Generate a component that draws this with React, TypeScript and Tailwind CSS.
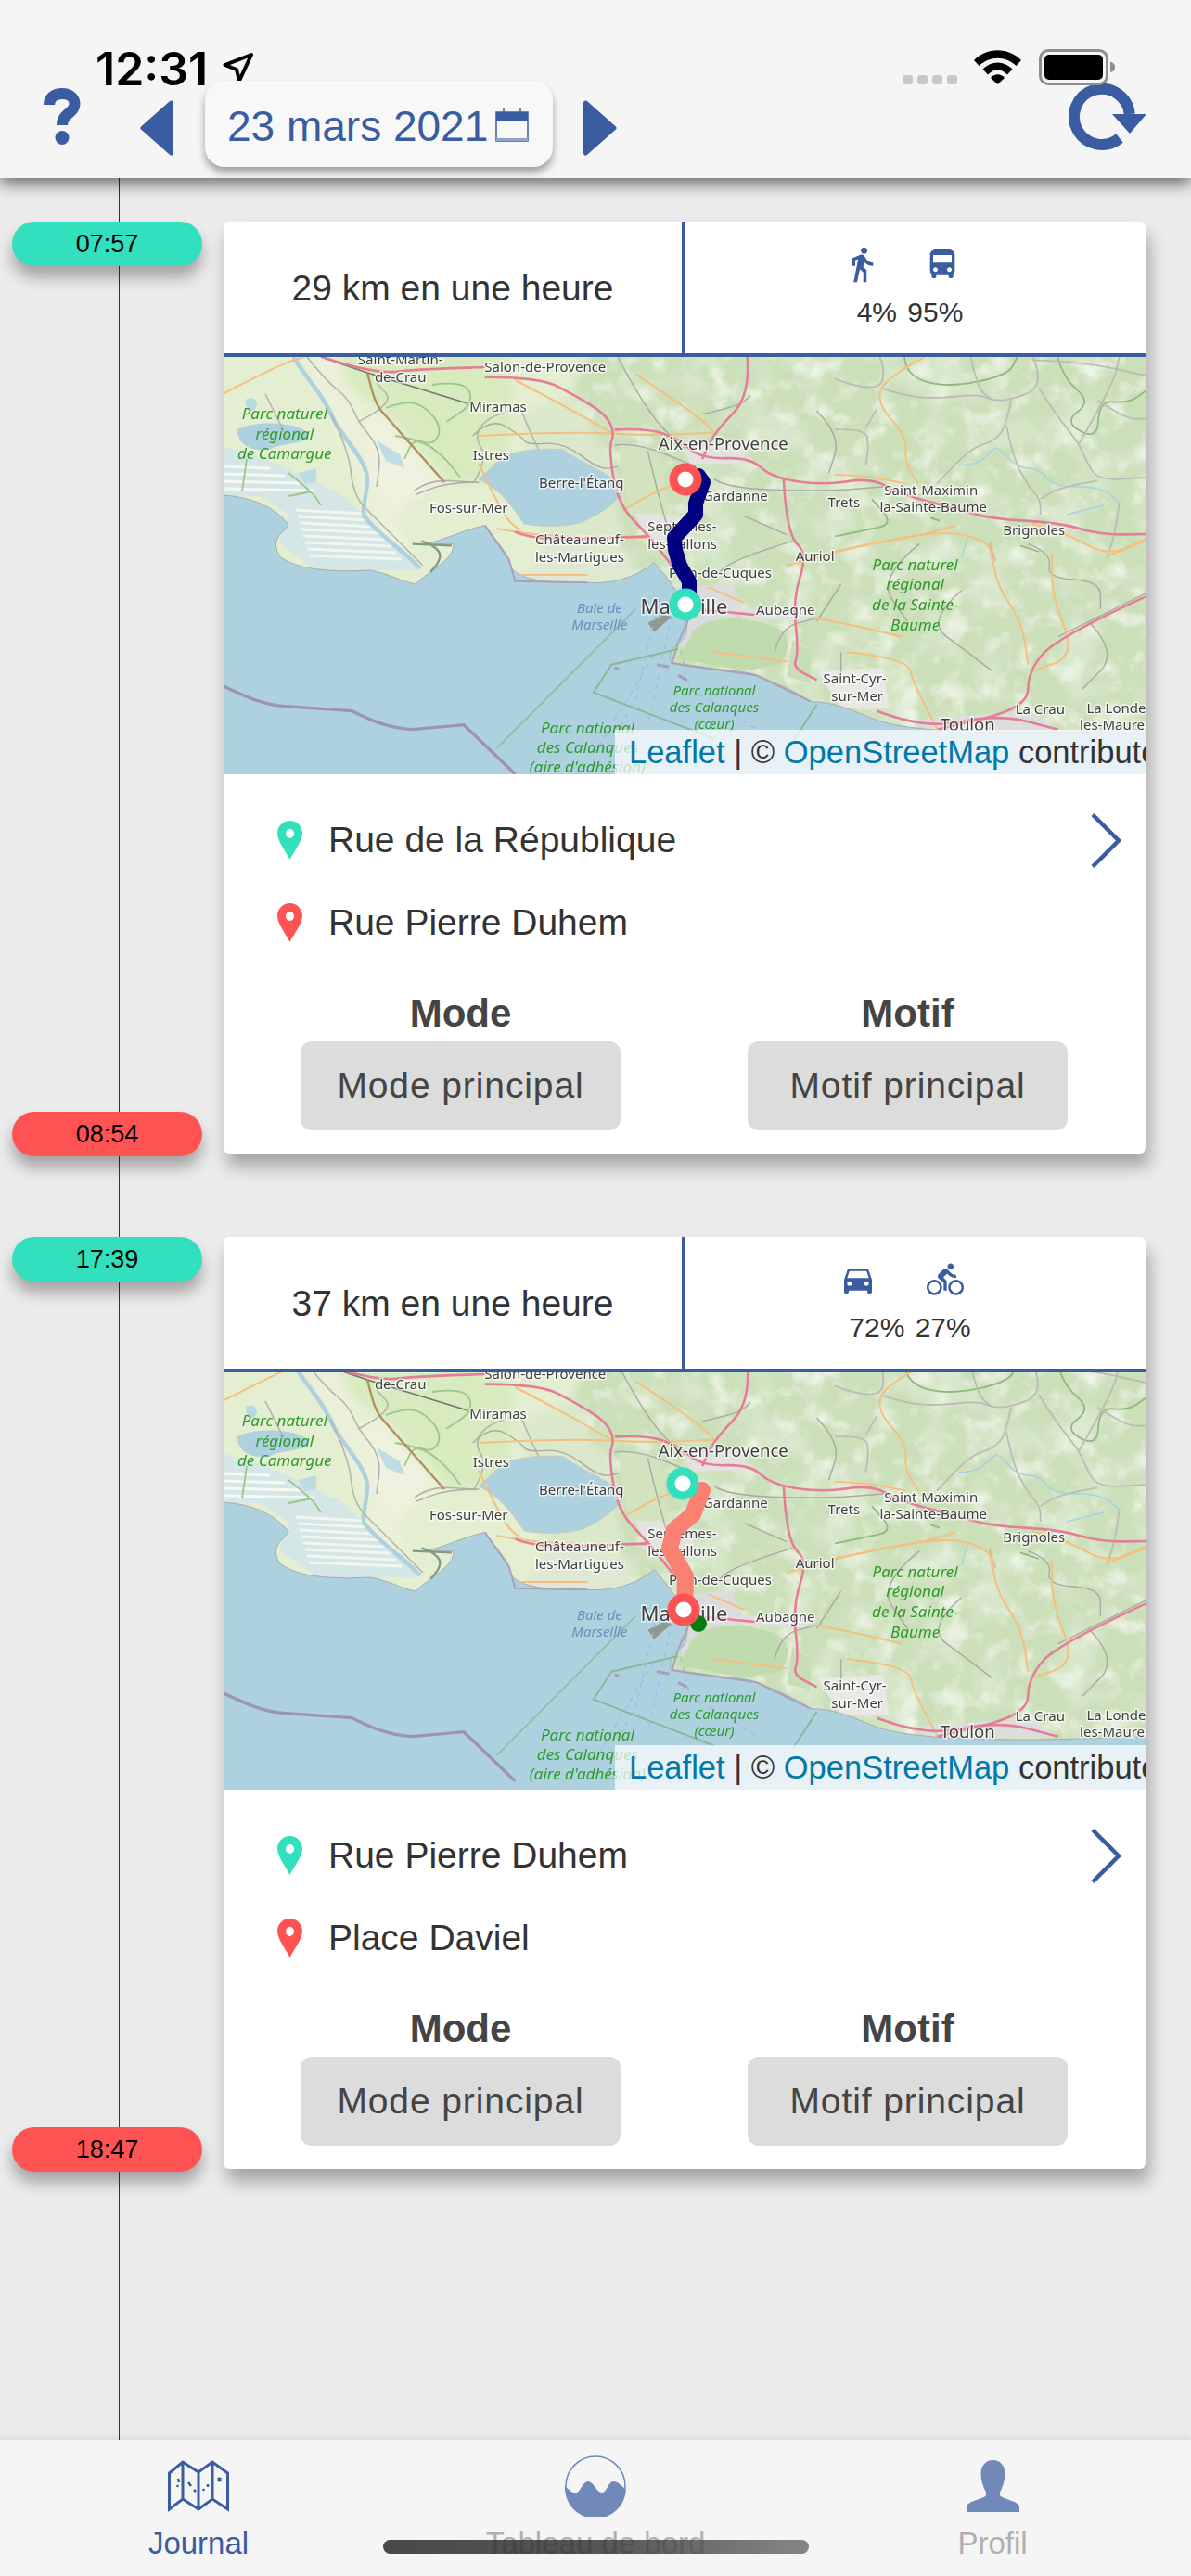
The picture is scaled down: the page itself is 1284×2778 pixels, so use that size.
import React from "react";
import { MdDirectionsWalk, MdDirectionsBus, MdDirectionsCar, MdDirectionsBike } from "react-icons/md";

const BLUE = "#3a5ca0";
const lx = (z: number) => z * 0.6506 - 11;
const ly = (z: number) => z / 3 - 15;

// Rounds a polyline "M x y L x y ..." so roads read as curves, not straight segments.
function smooth(d: string) {
  return d
    .split("M")
    .filter((s) => s.trim())
    .map((seg) => {
      const n = seg.match(/-?[\d.]+/g)!.map(Number);
      const p: [number, number][] = [];
      for (let i = 0; i + 1 < n.length; i += 2) p.push([n[i], n[i + 1]]);
      let out = `M${p[0][0]} ${p[0][1]}`;
      for (let i = 1; i < p.length - 1; i++) {
        const mx = (p[i][0] + p[i + 1][0]) / 2;
        const my = (p[i][1] + p[i + 1][1]) / 2;
        out += ` Q${p[i][0]} ${p[i][1]} ${mx} ${my}`;
      }
      const last = p[p.length - 1];
      return out + ` L${last[0]} ${last[1]}`;
    })
    .join(" ");
}

const PINK = [
  "M180 45 L265 100 L340 85 L450 78",
  "M450 110 L540 110 L600 170 L650 230 L665 290 L655 340 L670 520 L720 620 L760 720 L790 790",
  "M665 280 L720 275 L770 310 L810 375 L890 370 L925 435 L1010 460 L1090 435 L1140 490 L1220 530 L1290 570 L1400 580 L1470 620 L1545 618",
  "M885 45 L890 170 L830 290 L810 375",
  "M945 440 L950 620 L985 680 L960 830 L970 1000 L960 1050 L1000 1090",
  "M790 860 L850 870 L900 880",
  "M1545 820 L1400 950 L1350 1060 L1350 1180 L1200 1250",
  "M500 610 L530 640 L720 625",
  "M1100 1190 L1180 1250 L1300 1200 L1400 1250",
];
const ORANGE = [
  "M15 165 L110 70 L150 45",
  "M440 300 L590 285 L720 300 L830 290",
  "M1230 590 L1180 620 L1060 660 L950 720",
  "M1290 640 L1290 760 L1340 900 L1350 1040",
  "M1140 950 L1100 930 L1000 890",
  "M470 600 L520 620 L640 630 L720 630",
  "M680 540 L730 480 L780 450",
  "M1050 1000 L1150 1020 L1160 1100 L1200 1250",
  "M830 1000 L950 1030",
  "M500 120 L560 180 L660 290",
  "M700 100 L800 230 L830 290",
  "M440 390 L480 560 L510 610",
  "M1390 680 L1385 800 L1430 1010 L1360 1060",
  "M510 750 L620 750",
  "M820 790 L880 840",
  "M1480 690 L1545 640",
];
const GRAY = [
  "M670 45 L720 230 L780 340",
  "M430 300 L460 240 L510 300 L520 330 L580 320 L640 410 L670 400",
  "M665 330 L700 320 L800 400",
  "M720 350 L750 600 L790 790",
  "M810 230 L870 205 L890 170",
  "M830 440 L850 470 L1010 480 L1110 465",
  "M440 450 L390 450 L335 490",
  "M930 1000 L940 920 L1000 890",
  "M1040 1000 L1040 1090",
  "M1350 650 L1390 680 L1380 760 L1470 770 L1470 860",
  "M1170 650 L1100 760 L1150 900",
  "M880 560 L950 620",
  "M1400 950 L1545 810",
  "M960 640 L860 700 L830 760",
  "M1040 780 L1000 900",
  "M1240 800 L1180 900 L1250 1000 L1290 1060",
  "M1450 900 L1500 1000 L1440 1120",
  "M1000 220 L1040 300 L1020 420",
];
// Eastern hills, in crop coordinates of a 3x view starting at map x = 659.
const EAST_GRAY = [
  "M150 100 L220 125 L330 135 L460 120 L510 140 L560 140 L650 110 L660 50 L640 0",
  "M570 140 L555 220 L520 270 L440 295 L330 410",
  "M555 220 L575 320 L620 410 L665 460 L665 510",
  "M660 100 L710 180 L790 280 L810 330 L850 400 L1005 390",
  "M850 400 L730 420 L665 460",
  "M440 0 L460 100 L510 140",
  "M0 70 L60 95 L150 100 L160 40 L145 0",
  "M0 235 L100 230 L110 290 L100 350",
  "M100 230 L135 170",
  "M790 280 L900 90 L920 0",
  "M640 10 L800 15 L1005 60",
  "M850 140 L940 200 L1005 200",
  "M920 470 L910 560 L880 650",
  "M500 600 L520 660",
];
const EAST_RIVER = [
  "M400 350 L460 350 L510 300 L530 290 L590 360 L660 360 L710 420 L860 420 L920 470",
  "M750 510 L870 480",
  "M410 650 L430 580",
];
const EAST_PARK = [
  "M225 0 L230 60 L360 100 L560 60 L590 0",
  "M720 0 L740 70 L830 145 L740 210 L850 270 L855 140 L950 150 L1005 110",
  "M0 580 L100 560 L190 540 L120 460",
  "M310 520 L340 530 M600 610 L660 630",
];
const EAST_ORANGE = [
  "M290 0 L160 70 L135 150 L235 260 L225 340 L270 410",
  "M0 630 L130 600 L370 560 L500 600 L510 660",
  "M0 380 L110 385 L230 410",
  "M640 540 L750 570 L880 645 L1005 590",
];
const WEST_GRAY = [
  "M90 0 L110 25 L135 45 L145 70 L170 100 L165 140",
  "M45 40 L70 90",
  "M145 70 L185 50 L165 28",
  "M115 60 L135 100 L140 150 L165 175 L215 225",
  "M205 145 L220 132 L270 135",
  "M270 135 L285 110 L270 85 L285 65 L320 55",
  "M320 55 L330 80 L345 110",
];
const WEST_PARK = [
  "M175 55 L200 45 L225 60 L235 80 L225 95 L205 88 L195 110",
  "M185 85 L215 90 L240 110 L255 130",
  "M225 30 L260 25 L270 50 L240 70",
  "M20 145 L25 110 M70 125 L95 145 L105 160 M70 150 L95 145",
];
const LABELS: [string, number, number, number?][] = [
  ["Saint-Martin-", 310, 58],
  ["de-Crau", 310, 115],
  ["Salon-de-Provence", 550, 82],
  ["Miramas", 472, 210],
  ["Aix-en-Provence", 845, 330, 18.5],
  ["Istres", 460, 365],
  ["Berre-l'Étang", 610, 457],
  ["Fos-sur-Mer", 423, 538],
  ["Gardanne", 865, 498],
  ["Trets", 1045, 518],
  ["Saint-Maximin-", 1193, 480],
  ["la-Sainte-Baume", 1193, 535],
  ["Brignoles", 1360, 610],
  ["Châteauneuf-", 607, 640],
  ["les-Martigues", 607, 697],
  ["Septèmes-", 777, 598],
  ["les-Vallons", 777, 655],
  ["Plan-de-Cuques", 840, 747],
  ["Auriol", 997, 693],
  ["Marseille", 780, 858, 22],
  ["Aubagne", 948, 868],
  ["Saint-Cyr-", 1063, 1090],
  ["sur-Mer", 1067, 1147],
  ["La Crau", 1370, 1188],
  ["La Londe-", 1500, 1185],
  ["les-Maures", 1495, 1240],
  ["Toulon", 1250, 1240, 18.5],
];
const PARKS: [string, number, number, number?][] = [
  ["Parc naturel", 118, 233],
  ["régional", 118, 298],
  ["de Camargue", 118, 362],
  ["Parc naturel", 1163, 720],
  ["régional", 1163, 785],
  ["de la Sainte-", 1163, 850],
  ["Baume", 1163, 915],
  ["Parc national", 830, 1127, 15],
  ["des Calanques", 830, 1182, 15],
  ["(cœur)", 830, 1237, 15],
  ["Parc national", 620, 1248],
  ["des Calanques", 620, 1312],
  ["(aire d'adhésion)", 620, 1375],
];

const SEA =
  "M0 492 C50 490 100 520 125 590 C110 620 95 640 110 690 C130 720 170 745 260 735 C290 745 310 770 335 780 C355 740 400 700 398 650 L350 650 C380 640 420 600 450 590 C460 620 480 660 490 700 C490 740 510 780 620 775 C660 780 700 760 730 710 C745 740 770 800 790 880 C780 920 790 950 770 970 C755 1000 755 1020 760 1035 C800 1060 870 1050 900 1075 C930 1100 960 1120 990 1160 C1030 1160 1060 1190 1100 1220 C1160 1260 1300 1270 1545 1250 L1545 1500 L0 1500 Z";
const BERRE =
  "M470 385 C490 340 560 340 580 345 C610 390 650 410 680 470 C670 510 650 545 610 580 C570 600 530 590 515 585 C490 510 470 470 440 440 Z";

function MapDefs() {
  return (
    <defs>
      <filter id="map-mottle" x="0" y="0" width="100%" height="100%">
        <feTurbulence type="fractalNoise" baseFrequency="0.04" numOctaves="4" seed="11" />
        <feColorMatrix values="0 0 0 0 0.87  0 0 0 0 0.91  0 0 0 0 0.81  2.6 0 0 0 -1.3" />
      </filter>
      <filter id="map-dark" x="0" y="0" width="100%" height="100%">
        <feTurbulence type="fractalNoise" baseFrequency="0.02" numOctaves="3" seed="4" />
        <feColorMatrix values="0 0 0 0 0.74  0 0 0 0 0.84  0 0 0 0 0.67  0 2.4 0 0 -1.15" />
      </filter>
      <filter id="map-soft" x="-2%" y="-2%" width="104%" height="104%">
        <feGaussianBlur stdDeviation="0.45" />
      </filter>
      <filter id="map-land" x="-5%" y="-5%" width="110%" height="110%">
        <feGaussianBlur stdDeviation="5" />
      </filter>
      <clipPath id="map-east">
        <path d="M370 -20 L1020 -20 L1020 480 L370 480 Z" />
      </clipPath>
    </defs>
  );
}

function Stroke({ items, color, w, op }: { items: string[]; color: string; w: number; op?: number }) {
  return (
    <>
      {items.map((d, i) => (
        <path key={i} d={smooth(d)} stroke={color} strokeWidth={w} strokeOpacity={op} fill="none" vectorEffect="non-scaling-stroke" />
      ))}
    </>
  );
}

function BaseMap() {
  return (
    <g filter="url(#map-soft)">
      <rect x="-20" y="-20" width="1040" height="500" fill="#cbdfb9" />
      <rect x="-20" y="-20" width="1040" height="500" filter="url(#map-dark)" />
      <rect x="-20" y="-20" width="1040" height="500" filter="url(#map-mottle)" />
      {/* western plains */}
      <g filter="url(#map-land)">
        <path d="M-25 -25 L395 -25 L370 60 L395 130 L430 210 L470 270 L300 280 L-25 220 Z" fill="#e4eed0" />
        <path d="M110 -25 L300 -25 L315 60 L300 135 L245 135 L170 55 L110 20 Z" fill="#d8ebbf" />
        <path d="M130 70 L170 60 L235 135 L195 160 L175 195 L150 140 Z" fill="#eff2de" />
        <path d="M75 -25 L110 -25 L150 60 L160 130 L210 220 L170 200 L135 110 Z" fill="#ebf0d9" />
        <path d="M320 60 L380 40 L420 130 L430 200 L345 200 L335 140 Z" fill="#dbe8cb" />
        <path d="M350 195 L440 210 L445 245 L320 250 Z" fill="#dfe8d2" />
      </g>
      <g transform="translate(-11,-15) scale(0.6506,0.33333)">
        <path d="M670 330 L740 340 L760 620 L690 560 Z" fill="#d3e2bf" />
        {/* urban */}
        <path d="M760 790 L860 780 L880 870 L820 950 L780 1000 L760 880 Z" fill="#dcdcdc" />
        <path d="M780 330 L880 320 L880 390 L790 390 Z" fill="#e2e2df" />
        <path d="M700 550 L790 560 L800 660 L720 670 Z" fill="#e3e3df" />
        <path d="M860 860 L1000 860 L980 900 L880 890 Z" fill="#e0e0de" />
        <path d="M1150 1220 L1350 1190 L1400 1250 L1200 1260 Z" fill="#dddddb" />
        <path d="M1000 1060 L1110 1050 L1120 1180 L1040 1180 Z" fill="#e9e8e4" />
        {/* calanques */}
        <path d="M790 950 C800 890 860 880 900 900 C960 920 960 980 940 1040 L880 1060 L770 1020 Z" fill="#c0dbae" />
        <path d="M960 960 L990 1000 L990 1100 L950 1080 Z" fill="#c8deb6" />
      </g>
      {/* saltmarsh and lagoons */}
      <path d="M-5 95 L45 110 L90 130 L130 150 L210 230 L100 230 L60 200 L70 170 L40 150 L-5 150 Z" fill="#d4e7e6" />
      {[118, 126, 134, 142].map((y) => (
        <path key={y} d={`M0 ${y} L${50 + (y - 118) * 2} ${y + 2}`} stroke="#f6f8f4" strokeWidth="3" />
      ))}
      {[165, 172, 179, 186, 193, 200, 207, 214].map((y, i) => (
        <path key={y} d={`M${78 + i * 2} ${y} L${150 + i * 6} ${y + 4}`} stroke="#f3f6ef" strokeWidth="3" />
      ))}
      <path d="M15 78 C40 66 90 72 92 85 C88 95 60 92 50 100 C30 102 15 95 15 78Z" fill="#aed1df" />
      <path d="M25 45 C35 42 40 52 32 58 C25 58 22 50 25 45Z" fill="#b7d8e0" />
      <path d="M165 90 L190 105 L195 120 L175 112 Z" fill="#c0dde6" />
      <path d="M80 125 L100 120 L100 135 L88 137 Z" fill="#bddbe2" />
      {/* Rhône */}
      <path d="M73 -5 C85 20 105 35 120 70 C135 95 152 110 155 130 C155 150 148 165 152 172 C165 190 190 205 212 228" stroke="#aed1df" strokeWidth="4.5" fill="none" />
      <Stroke items={WEST_GRAY} color="#b4b4ae" w={1.6} />
      <Stroke items={WEST_PARK} color="#9cc68c" w={1.8} />
      <path d="M105 0 L155 17 L263 50" stroke="#75756f" strokeWidth="1.8" fill="none" />
      <path d="M155 17 C160 35 162 48 170 58 L238 135" stroke="#b0905f" strokeWidth="2.4" fill="none" />
      <g transform="translate(659,0) scale(0.3333)">
        <Stroke items={EAST_PARK} color="#8dbb7e" w={1.8} />
        <Stroke items={EAST_RIVER} color="#a8d0e6" w={1.5} />
        <Stroke items={EAST_GRAY} color="#bcbcb6" w={1.8} />
        <Stroke items={EAST_ORANGE} color="#f4bf7f" w={2} />
      </g>
      <g transform="translate(-11,-15) scale(0.6506,0.33333)">
        <path d={SEA} fill="#aed1df" stroke="#a5adb0" strokeWidth="1" vectorEffect="non-scaling-stroke" />
        <path d={BERRE} fill="#aed1df" stroke="#c6ccc0" strokeWidth="1" vectorEffect="non-scaling-stroke" />
        <path d="M345 640 C380 665 385 690 360 740 M330 650 L395 655" stroke="#7f9a85" strokeWidth="2.4" fill="none" vectorEffect="non-scaling-stroke" />
        <path d="M450 590 L490 700 L500 770 L620 775 M790 880 L770 970 L760 1035 L900 1075 L990 1160" stroke="#ab9fbc" strokeWidth="2" fill="none" vectorEffect="non-scaling-stroke" />
        <path d="M720 905 L745 880 L760 885 L730 935 Z" fill="#8d9a90" />
        <path d="M665 1050 L672 1056 M770 1075 L785 1090 M735 1040 L755 1048" stroke="#a89cb8" strokeWidth="3" vectorEffect="non-scaling-stroke" />
        {/* shipping lanes */}
        <path d="M740 820 L700 1150 L670 1260 M760 880 L735 1100 L720 1240 M770 960 L790 1120 L910 1260 M730 1010 L640 1300" stroke="#9db7ea" strokeWidth="1.2" strokeDasharray="5 6" fill="none" vectorEffect="non-scaling-stroke" />
        <path d="M470 1310 L700 860" stroke="#8fc0a8" strokeWidth="2" fill="none" vectorEffect="non-scaling-stroke" />
        <path d="M770 990 L660 1040 L630 1130 L710 1190 L830 1280 M1000 1170 L960 1290" stroke="#86b89f" strokeWidth="2" fill="none" vectorEffect="non-scaling-stroke" />
        <path
          d="M17 1110 C50 1140 80 1170 120 1175 L230 1190 C260 1220 290 1245 330 1250 L415 1235 L500 1394"
          stroke="#9a89a8"
          strokeWidth="3.4"
          strokeOpacity="0.85"
          fill="none"
          vectorEffect="non-scaling-stroke"
        />
        <Stroke items={GRAY} color="#a9a9a4" w={1.4} />
        <Stroke items={ORANGE} color="#f4bf7f" w={2} />
        <Stroke items={PINK} color="#e67d96" w={2.6} />
      </g>
      <g textAnchor="middle" dominantBaseline="middle">
        {LABELS.map(([t, x, y, s]) => (
          <text
            key={t + x}
            x={lx(x)}
            y={ly(y)}
            fontSize={s ?? 15}
            fill="#404040"
            stroke="#ffffff"
            strokeOpacity="0.7"
            strokeWidth="3"
            style={{ paintOrder: "stroke" }}
          >
            {t}
          </text>
        ))}
        {PARKS.map(([t, x, y, s]) => (
          <text key={t + x} x={lx(x)} y={ly(y)} fontSize={s ?? 17} fontStyle="italic" fill="#2f9a2c">
            {t}
          </text>
        ))}
        <text x={lx(640)} y={ly(862)} fontSize="15" fontStyle="italic" fill="#6f8cbd">
          Baie de
        </text>
        <text x={lx(640)} y={ly(915)} fontSize="15" fontStyle="italic" fill="#6f8cbd">
          Marseille
        </text>
      </g>
    </g>
  );
}

function Marker({ x, y, color }: { x: number; y: number; color: string }) {
  return <circle cx={x} cy={y} r="13" fill="#fff" stroke={color} strokeWidth="9" />;
}

function MapView({
  shift,
  route,
  routeColor,
  routeWidth,
  start,
  end,
  dot,
}: {
  shift: number;
  route: string;
  routeColor: string;
  routeWidth: number;
  start: [number, number];
  end: [number, number];
  dot?: [number, number];
}) {
  return (
    <div className="relative h-[450px] w-[994px] overflow-hidden">
      <svg width="994" height="450" viewBox="0 0 994 450" className="block font-['Noto_Sans']">
        <MapDefs />
        <g transform={`translate(0,${shift})`}>
          <BaseMap />
        </g>
        {dot && <circle cx={dot[0]} cy={dot[1]} r="9" fill="#0b7a12" />}
        <path d={route} stroke={routeColor} strokeWidth={routeWidth} fill="none" strokeLinejoin="round" strokeLinecap="round" />
        <Marker x={end[0]} y={end[1]} color="#ff5252" />
        <Marker x={start[0]} y={start[1]} color="#33e0bd" />
      </svg>
      <div className="absolute bottom-0 right-0 flex h-[48px] w-[572px] items-center overflow-hidden whitespace-nowrap bg-[rgba(255,255,255,0.7)] pl-[15px] text-[34.5px] leading-[48px] text-[#333]">
        <span className="text-[#0078a8]">Leaflet</span>
        <span className="whitespace-pre"> | © </span>
        <span className="text-[#0078a8]">OpenStreetMap</span>
        <span className="whitespace-pre"> contributors</span>
      </div>
    </div>
  );
}

function Pin({ color }: { color: string }) {
  return (
    <svg width="27" height="42" viewBox="0 0 27 42" className="shrink-0">
      <path
        fillRule="evenodd"
        d="M13.5 0C6 0 0 6 0 13.5C0 22 9 33 13.5 42C18 33 27 22 27 13.5C27 6 21 0 13.5 0ZM13.5 9A4.5 5 0 1 1 13.5 19A4.5 5 0 1 1 13.5 9Z"
        fill={color}
      />
    </svg>
  );
}

function Pill({ time, color }: { time: string; color: string }) {
  return (
    <div
      className={`flex h-[48px] w-[205px] items-center justify-center rounded-[24px] text-[27px] text-black shadow-[0_12px_16px_rgba(0,0,0,0.3)] ${color}`}
    >
      {time}
    </div>
  );
}

function Trip(props: {
  from: string;
  to: string;
  km: string;
  icons: React.ReactNode;
  iconGap: string;
  pct: string;
  startTime: string;
  endTime: string;
  map: React.ComponentProps<typeof MapView>;
}) {
  return (
    <div className="flex">
      <div className="relative z-10 -mb-[3px] flex w-[241px] flex-col justify-between pl-[13px]">
        <Pill time={props.startTime} color="bg-[#33e0bd]" />
        <Pill time={props.endTime} color="bg-[#ff5252]" />
      </div>
      <div className="h-[1005px] w-[994px] overflow-hidden rounded-[6px] bg-white shadow-[4px_14px_18px_rgba(0,0,0,0.3)]">
        <div className="flex h-[146px] border-b-[4px] border-[#3a5ca0]">
          <div className="flex w-[494px] items-center justify-center pt-[3px] text-[39px] text-[#333]">{props.km}</div>
          <div className="flex flex-1 flex-col items-center border-l-[4px] border-[#3a5ca0] text-[#3a5ca0]">
            <div className={`mt-[24px] flex h-[44px] items-center pr-[30px] ${props.iconGap}`}>{props.icons}</div>
            <div className="mt-[10px] whitespace-pre pr-[12px] text-[30px] leading-[40px] text-[#333] [word-spacing:3px]">{props.pct}</div>
          </div>
        </div>
        <MapView {...props.map} />
        <div className="relative">
          <svg width="35" height="59" viewBox="0 0 35 59" className="absolute right-[25px] top-[42px]">
            <path d="M3 1.5 L31 29.5 L3 57.5" stroke={BLUE} strokeWidth="4.5" fill="none" />
          </svg>
          <div className="flex flex-col gap-[39px] pl-[58px] pt-[46px] text-[39px] text-[#333]">
            <div className="flex h-[50px] items-center gap-[28px]">
              <Pin color="#33e0bd" />
              <span>{props.from}</span>
            </div>
            <div className="flex h-[50px] items-center gap-[28px]">
              <Pin color="#ff5252" />
              <span>{props.to}</span>
            </div>
          </div>
          <div className="mt-[49px] flex gap-[137px] pl-[83px]">
            {[
              ["Mode", "Mode principal"],
              ["Motif", "Motif principal"],
            ].map(([a, b]) => (
              <div key={a} className="flex w-[345px] flex-col items-center gap-[6px]">
                <div className="h-[48px] text-[42px] font-bold leading-[48px] text-[#444]">{a}</div>
                <div className="flex h-[96px] w-[345px] items-center justify-center rounded-[12px] bg-[#dcdcdc] text-[39px] tracking-[0.9px] text-[#444]">
                  {b}
                </div>
              </div>
            ))}
          </div>
        </div>
      </div>
    </div>
  );
}

function StatusBar() {
  return (
    <>
      <div className="absolute left-[103px] top-[44px] font-['Inter'] text-[50px] font-semibold leading-[60px] text-black">
        12:31
      </div>
      <svg width="34" height="34" viewBox="0 0 34 34" className="absolute left-[240px] top-[56px]">
        <path d="M31 3 L2.5 14 L15 19 L18 31 Z" fill="#f5f5f5" stroke="#000" strokeWidth="4" strokeLinejoin="round" />
      </svg>
      <div className="absolute left-[973px] top-[81px] flex gap-[5px]">
        {[0, 1, 2, 3].map((i) => (
          <div key={i} className="h-[10px] w-[11px] rounded-[3px] bg-[#c8c8c8]" />
        ))}
      </div>
      <svg width="51" height="37" viewBox="0 0 51 37" className="absolute left-[1050px] top-[54px]">
        <path d="M0 11 C14 -3.5 37 -3.5 51 11 L45.5 17 C34 6 17 6 5.5 17 Z" fill="#000" />
        <path d="M9.5 20.5 C19 11 32 11 41.5 20.5 L36 26.5 C28.5 19.5 22.5 19.5 15 26.5 Z" fill="#000" />
        <path d="M18 30 C22 25 29 25 33 30 L25.5 37 Z" fill="#000" />
      </svg>
      <div className="absolute left-[1120px] top-[53px] flex h-[39px] w-[75px] items-center justify-center rounded-[10px] border-[3.5px] border-[#8e8e8e]">
        <div className="h-[27px] w-[63px] rounded-[5px] bg-black" />
      </div>
      <div className="absolute left-[1197px] top-[67px] h-[11px] w-[5px] rounded-r-[5px] bg-[#8e8e8e]" />
    </>
  );
}

function Header() {
  return (
    <header className="relative z-20 h-[192px] shrink-0 bg-[#f5f5f5] shadow-[0_6px_16px_rgba(0,0,0,0.55)]">
      <StatusBar />
      <div className="flex items-start pt-[87px]">
        <svg width="40" height="61" viewBox="0 0 40 61" className="ml-[47px] mt-[8px]">
          <path
            d="M6 18 C6 10 12 6 20 6 C28 6 33.5 10.5 33.5 17 C33.5 27 20 27 20 40"
            stroke={BLUE}
            strokeWidth="12"
            fill="none"
          />
          <circle cx="20" cy="53.5" r="7.5" fill={BLUE} />
        </svg>
        <svg width="36" height="60" viewBox="0 0 36 60" className="ml-[64px] mt-[21px]">
          <path d="M33.5 3 L3 30 L33.5 57 Z" fill={BLUE} stroke={BLUE} strokeWidth="5" strokeLinejoin="round" />
        </svg>
        <div className="relative z-10 ml-[34px] flex h-[93px] w-[375px] items-center gap-[8px] rounded-[21px] bg-[#f8f8f8] pl-[24px] pt-[6px] text-[46px] text-[#3a5ca0] shadow-[0_6px_8px_rgba(0,0,0,0.35)]">
          <span>23 mars 2021</span>
          <svg width="36" height="36" viewBox="0 0 36 36" className="-mt-[3px]">
            <rect x="1" y="4" width="34" height="31" fill="none" stroke={BLUE} strokeWidth="1.5" />
            <rect x="1" y="4" width="34" height="9" fill={BLUE} />
            <rect x="1" y="32" width="34" height="3" fill="#8ea3ca" />
            <path d="M9 0 V8 M27 0 V8" stroke={BLUE} strokeWidth="1.5" />
          </svg>
        </div>
        <svg width="36" height="60" viewBox="0 0 36 60" className="ml-[33px] mt-[21px]">
          <path d="M2.5 3 L33 30 L2.5 57 Z" fill={BLUE} stroke={BLUE} strokeWidth="5" strokeLinejoin="round" />
        </svg>
        <svg width="84" height="72" viewBox="0 0 84 72" className="ml-auto mr-[48px] mt-[3px]">
          <path d="M55 59 A30 30 0 1 1 65.8 33" stroke={BLUE} strokeWidth="12" fill="none" />
          <path d="M47 33 L84 33 L66 54 Z" fill={BLUE} />
        </svg>
      </div>
    </header>
  );
}

function Footer() {
  return (
    <footer className="relative z-20 grid h-[147px] shrink-0 grid-cols-3 bg-[#f5f5f5] pt-[17px] shadow-[0_-2px_6px_rgba(0,0,0,0.08)]">
      <div className="flex flex-col items-center">
        <div className="flex h-[66px] items-center">
          <svg width="66" height="56" viewBox="0 0 66 56">
            <path
              d="M1.5 14 L16 2 L33 13 L48 2 L64.5 14 V53 L48 42 L33 53 L16 42 L1.5 53 Z M16 2 V42 M33 13 V53 M48 2 V42"
              stroke={BLUE}
              strokeWidth="3"
              fill="none"
            />
            <path
              d="M11 20 L12 24 M10 27 L11 29 M22 24 L25 28 M28 32 L30 34 M38 31 L39 33 M43 26 L43 29 M54 19 L57 23 M57 19 L54 23"
              stroke={BLUE}
              strokeWidth="2.5"
            />
          </svg>
        </div>
        <div className="mt-[9px] text-[33px] leading-[40px] text-[#3a5ca0]">Journal</div>
      </div>
      <div className="flex flex-col items-center">
        <svg width="66" height="66" viewBox="0 0 66 66">
          <circle cx="33" cy="33" r="32" fill="none" stroke="#7089b8" strokeWidth="1.5" />
          <path
            d="M0 33 C4 36 8 42 13 40 C17 38 20 28 25 28 C31 28 34 40 40 40 C45 40 47 28 52 28 C58 28 62 34 66 37 A33 33 0 0 1 0 33Z"
            fill="#7089b8"
          />
        </svg>
        <div className="mt-[9px] text-[33px] leading-[40px] text-[#b0b0b0]">Tableau de bord</div>
      </div>
      <div className="flex flex-col items-center">
        <div className="flex h-[66px] items-center">
          <svg width="57" height="56" viewBox="0 0 57 56">
            <path
              d="M28.5 0 C36 0 41.5 6 41.5 14 C41.5 24 38 30 36 35 L36 38 C38 42 56 44 57 50 L57 56 L0 56 L0 50 C1 44 19 42 21 38 L21 35 C19 30 15.5 24 15.5 14 C15.5 6 21 0 28.5 0Z"
              fill="#7089b8"
            />
          </svg>
        </div>
        <div className="mt-[9px] text-[33px] leading-[40px] text-[#b0b0b0]">Profil</div>
      </div>
      <div className="absolute left-[413px] top-[108px] h-[15px] w-[459px] rounded-[8px] bg-gradient-to-r from-[rgba(40,40,40,0.84)] via-[rgba(50,50,50,0.82)] to-[rgba(110,110,110,0.82)]" />
    </footer>
  );
}

export default function App() {
  const r1 = "M512 128 L517 135 L509 158 L509 170 L486 195 L487 208 L492 225 L502 242 L502 270";
  const r2 = "M516 127 L506 153 L486 170 L481 190 L498 220 L497 256";
  return (
    <div className="flex h-[2778px] w-[1284px] flex-col overflow-hidden bg-[#ebebeb] font-['Liberation_Sans']">
      <Header />
      <main className="relative flex flex-1 flex-col gap-[90px] pt-[47px]">
        <div className="absolute bottom-0 left-[128px] top-0 w-px bg-[#333]" />
        <Trip
          from="Rue de la République"
          to="Rue Pierre Duhem"
          km="29 km en une heure"
          startTime="07:57"
          endTime="08:54"
          iconGap="gap-[46px]"
          pct="4% 95%"
          icons={
            <>
              <MdDirectionsWalk size={42} />
              <MdDirectionsBus size={40} />
            </>
          }
          map={{ shift: 0, route: r1, routeColor: "#000080", routeWidth: 16, start: [498, 267], end: [498, 132] }}
        />
        <Trip
          from="Rue Pierre Duhem"
          to="Place Daviel"
          km="37 km en une heure"
          startTime="17:39"
          endTime="18:47"
          iconGap="gap-[54px]"
          pct="72% 27%"
          icons={
            <>
              <MdDirectionsCar size={40} />
              <MdDirectionsBike size={40} />
            </>
          }
          map={{ shift: -9, route: r2, routeColor: "#fa8072", routeWidth: 18, start: [495, 120], end: [496, 256], dot: [512, 271] }}
        />
      </main>
      <Footer />
    </div>
  );
}
